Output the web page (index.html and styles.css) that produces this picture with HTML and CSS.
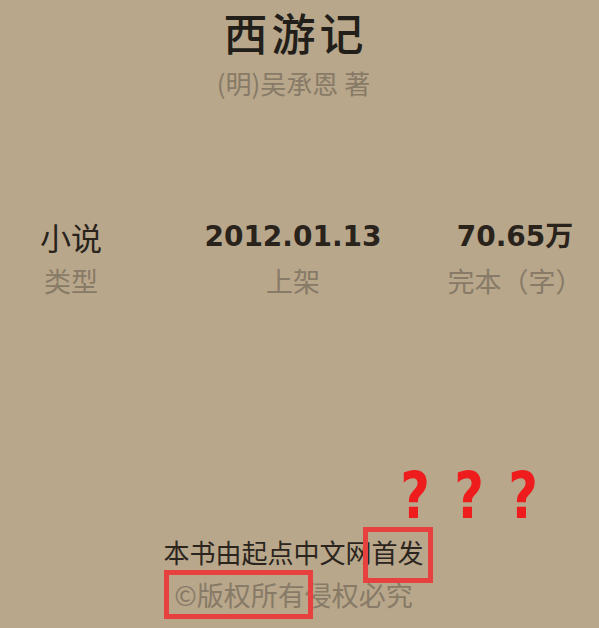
FILE: index.html
```html
<!DOCTYPE html>
<html lang="zh-CN">
<head>
<meta charset="utf-8">
<title>西游记</title>
<link rel="stylesheet" href="styles.css">
</head>
<body>
<main class="page">
  <header class="book-head">
    <h1 class="book-title">西游记</h1>
    <p class="book-author">(明)吴承恩 著</p>
  </header>

  <section class="stats">
    <div class="stat">
      <div class="stat-value">小说</div>
      <div class="stat-label">类型</div>
    </div>
    <div class="stat">
      <div class="stat-value num">2012.01.13</div>
      <div class="stat-label">上架</div>
    </div>
    <div class="stat">
      <div class="stat-value num">70.65万</div>
      <div class="stat-label">完本（字）</div>
    </div>
  </section>

  <div class="marks"><span class="qmark">?</span><span class="qmark">?</span><span class="qmark">?</span></div>

  <footer class="copyright">
    <p class="line-first">本书由起点中文网<span class="boxed boxed-first">首发</span></p>
    <p class="line-second"><span class="boxed boxed-second">©版权所有</span>侵权必究</p>
  </footer>
</main>
</body>
</html>
```
FILE: styles.css
```css
html, body {
  margin: 0;
  padding: 0;
}
body {
  background: #b8a78b;
  width: 599px;
  height: 628px;
  overflow: hidden;
  font-family: "Noto Sans CJK SC", "Noto Sans", sans-serif;
}
.page {
  position: relative;
  display: flex;
  flex-direction: column;
  height: 628px;
}
.book-head {
  display: flex;
  flex-direction: column;
  align-items: center;
  padding-right: 12px;
}
.book-title {
  margin: 0;
  font-size: 44px;
  line-height: 64px;
  font-weight: 500;
  color: #221e19;
  letter-spacing: 4px;
  padding-left: 4px;
}
.book-author {
  margin: 0;
  font-size: 26px;
  line-height: 38px;
  color: #877a67;
}
.stats {
  display: grid;
  grid-template-columns: 142px 302px 142px;
  justify-items: center;
  margin-top: 117px;
}
.stat {
  display: flex;
  flex-direction: column;
  align-items: center;
}
.stat-value {
  font-size: 31px;
  line-height: 36px;
  color: #29231c;
  font-weight: 400;
}
.stat-value.num {
  font-family: "DejaVu Sans", "Noto Sans CJK SC", sans-serif;
  font-size: 28px;
  font-weight: 700;
}
.stat-label {
  margin-top: 11px;
  font-size: 27px;
  line-height: 30px;
  color: #877a67;
}
.marks {
  position: absolute;
  left: 388px;
  top: 464px;
  display: flex;
}
.qmark {
  width: 54px;
  text-align: center;
  font-family: "DejaVu Sans", "Liberation Sans", sans-serif;
  font-weight: 700;
  font-size: 64px;
  line-height: 64px;
  color: #ee1c1c;
  display: inline-block;
  transform: scaleX(0.8);
}
.copyright {
  margin-top: auto;
  padding-bottom: 15px;
  display: flex;
  flex-direction: column;
  align-items: center;
  padding-right: 12px;
}
.line-first, .line-second {
  margin: 0;
  font-size: 26px;
  line-height: 36px;
}
.line-first {
  color: #2b251e;
}
.line-second {
  color: #877a67;
  margin-top: 7px;
  font-size: 27px;
}
.boxed {
  position: relative;
  display: inline-block;
}
.boxed::after {
  content: "";
  position: absolute;
  border: 5px solid #e6403f;
  box-sizing: border-box;
}
.boxed-first::after {
  left: -9px;
  right: -9px;
  top: -7px;
  bottom: -13px;
}
.boxed-second::after {
  left: -10px;
  right: -8px;
  top: -7px;
  bottom: -6px;
}
```
